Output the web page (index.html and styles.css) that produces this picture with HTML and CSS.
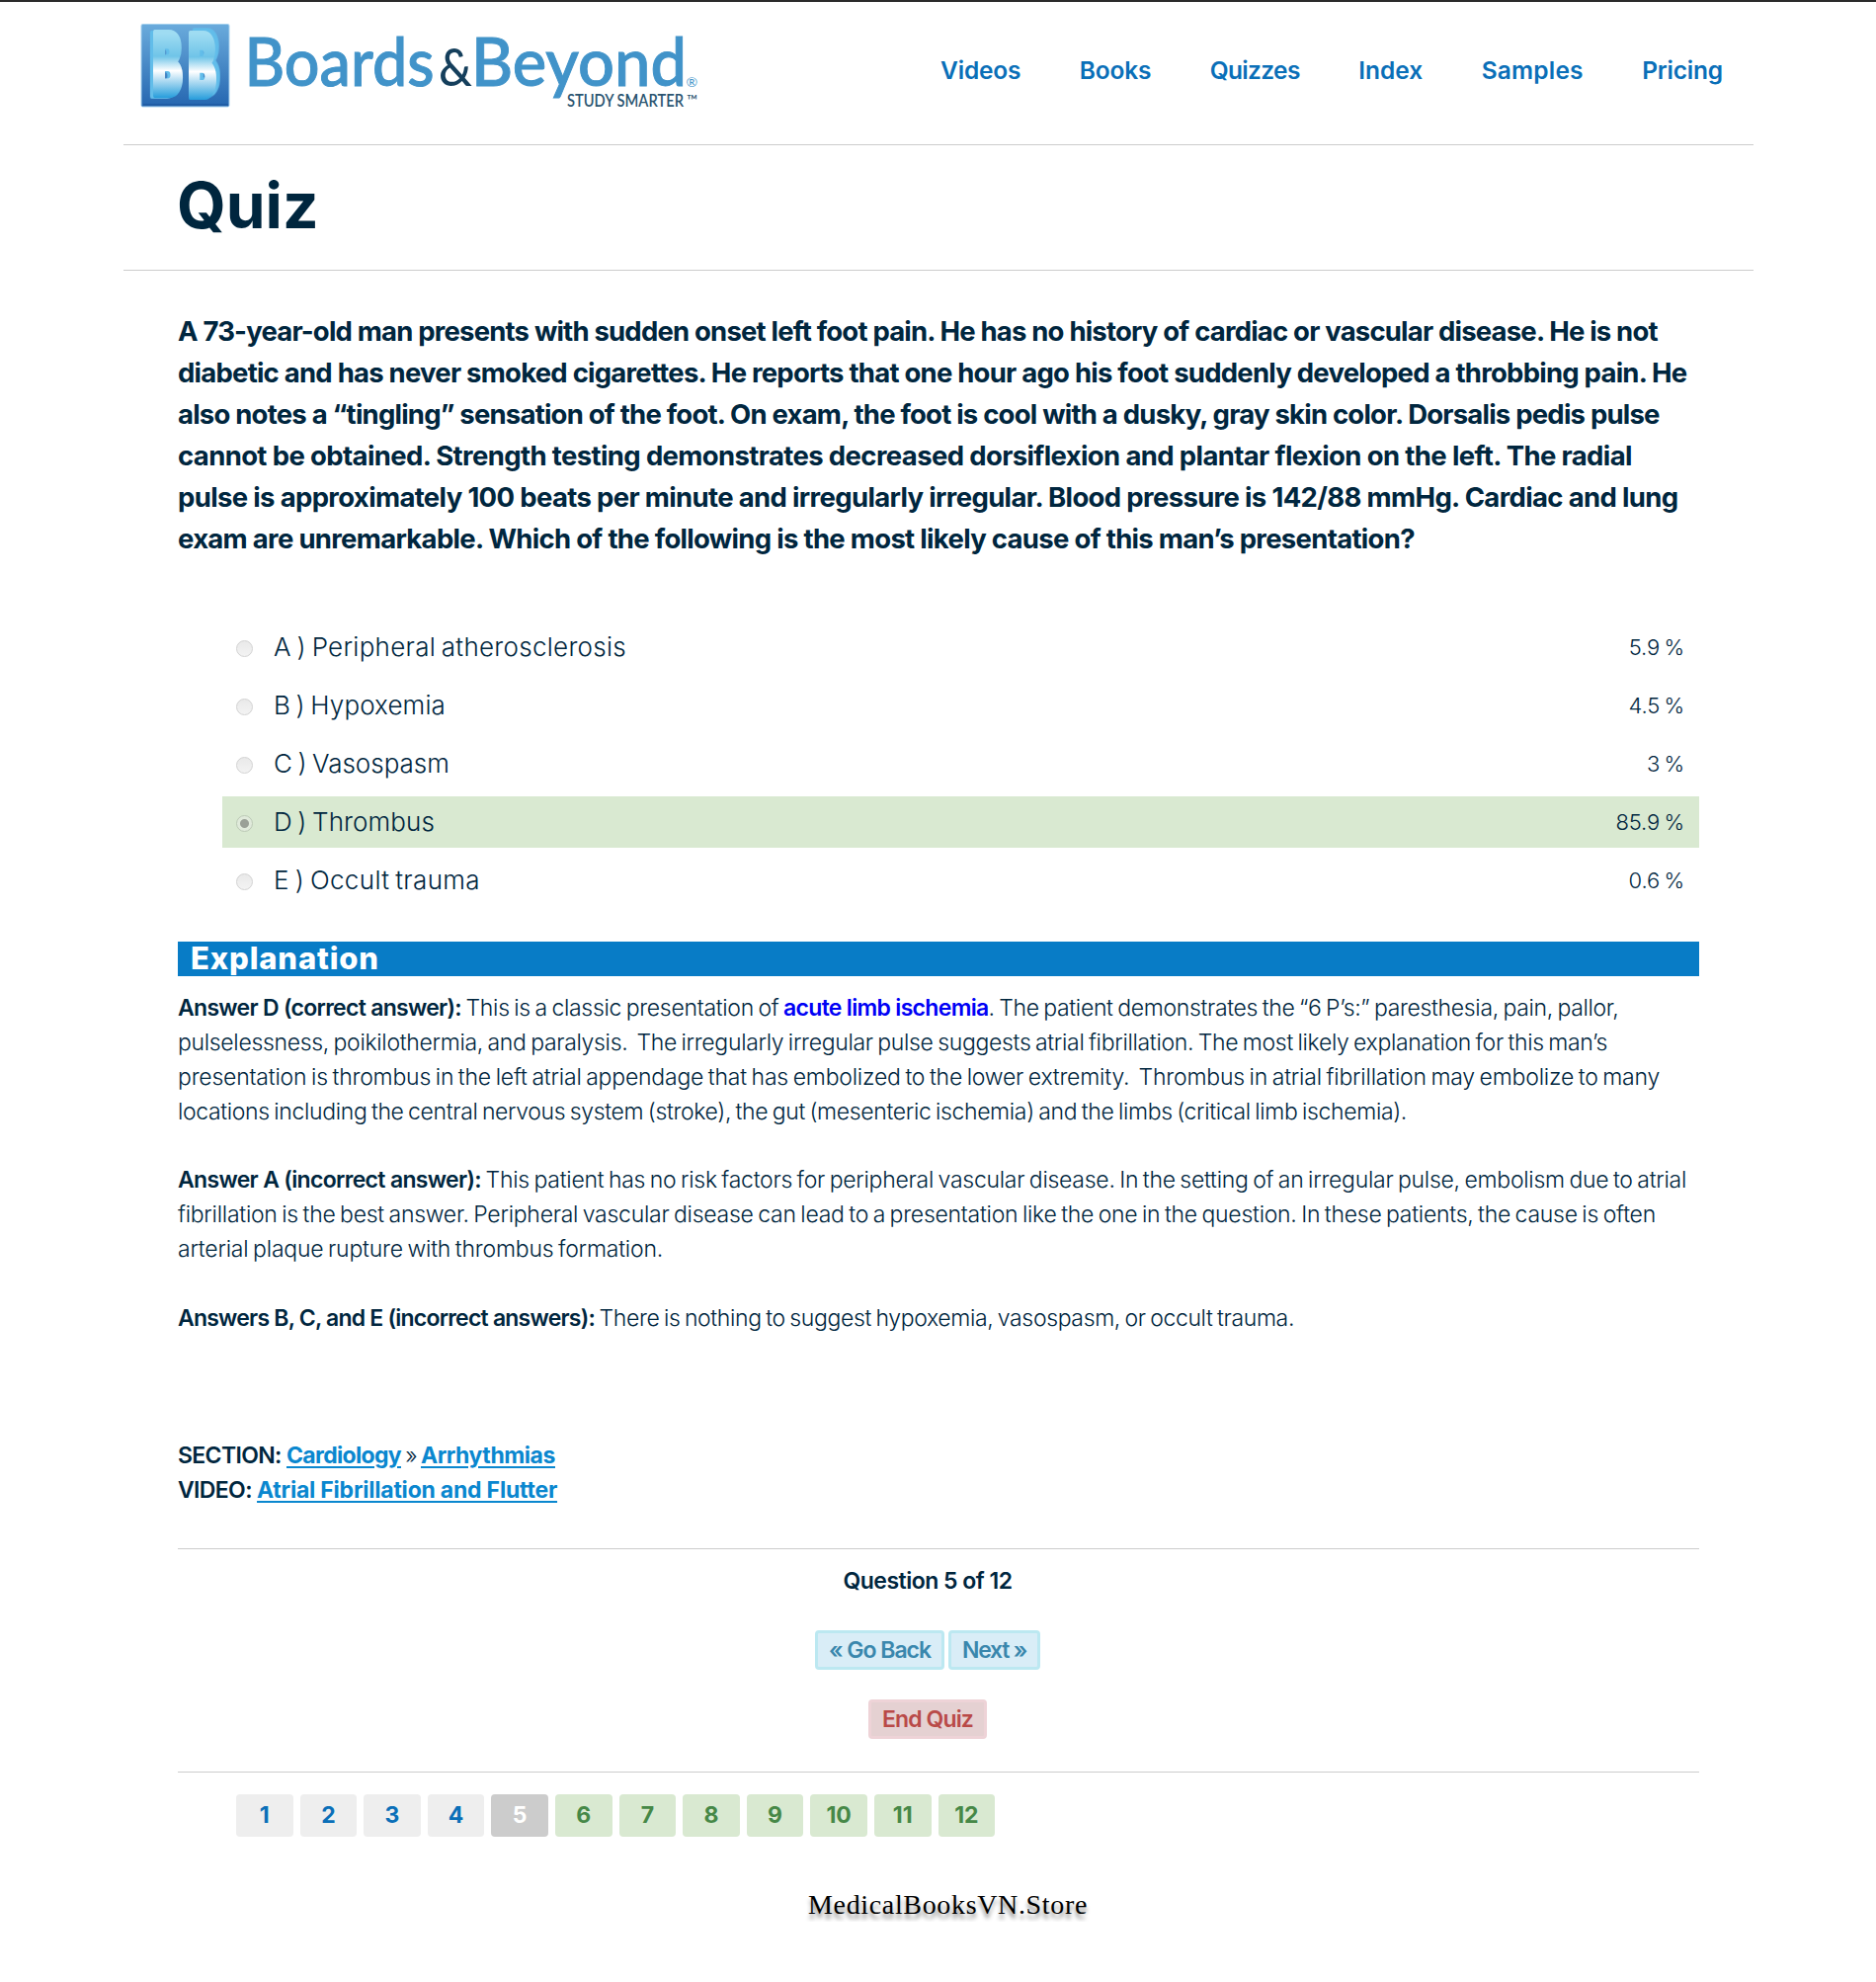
FILE: index.html
```html
<!DOCTYPE html>
<html lang="en">
<head>
<meta charset="utf-8">
<title>Quiz</title>
<link rel="stylesheet" href="styles.css">
</head>
<body>
<div class="page">
<header class="header">
<svg class="logo" width="590" height="100" viewBox="0 0 590 100" role="img" aria-label="Boards and Beyond">
<defs>
<linearGradient id="tile" x1="0" y1="0" x2="0" y2="1"><stop offset="0" stop-color="#6aabdc"/><stop offset="1" stop-color="#2566b0"/></linearGradient>
<linearGradient id="face" x1="0" y1="0" x2="0" y2="1"><stop offset="0.2" stop-color="#9fdcf2"/><stop offset="0.42" stop-color="#6fc4e8"/><stop offset="0.56" stop-color="#ffffff"/><stop offset="0.82" stop-color="#2a9fdc"/></linearGradient>
</defs>
<rect x="18" y="9.500" width="89" height="83.500" rx="1.500" fill="url(#tile)" stroke="#a4d0ee"/>
<path d="M20 91h86" stroke="#1f5aa2" stroke-width="1.500"/>
<g class="mark" stroke-width="7">
<text class="left" transform="translate(29.500 81) scale(.45 .86)" x="0" y="0">B</text>
<text class="back" transform="translate(65.500 83) scale(.42 .88)" x="0" y="0">B</text>
</g>
<g class="word">
<text x="122.500" y="72" textLength="192" lengthAdjust="spacingAndGlyphs">Boards</text>
<text class="amp" x="319" y="72" textLength="34" lengthAdjust="spacingAndGlyphs">&amp;</text>
<text x="352" y="72" textLength="218" lengthAdjust="spacingAndGlyphs">Beyond</text>
</g>
<text class="reg" x="569.500" y="73">®</text>
<text class="tag" x="449" y="93" textLength="118" lengthAdjust="spacingAndGlyphs">STUDY SMARTER</text>
<text class="tm" x="570" y="92">™</text>
</svg>
<nav class="nav"><a>Videos</a><a>Books</a><a>Quizzes</a><a>Index</a><a>Samples</a><a>Pricing</a></nav>
</header>
<div class="title"><h1>Quiz</h1></div>
<main class="main">
<div class="question">
<div>A 73-year-old man presents with sudden onset left foot pain. He has no history of cardiac or vascular disease. He is not</div>
<div>diabetic and has never smoked cigarettes. He reports that one hour ago his foot suddenly developed a throbbing pain. He</div>
<div>also notes a “tingling” sensation of the foot. On exam, the foot is cool with a dusky, gray skin color. Dorsalis pedis pulse</div>
<div>cannot be obtained. Strength testing demonstrates decreased dorsiflexion and plantar flexion on the left. The radial</div>
<div>pulse is approximately 100 beats per minute and irregularly irregular. Blood pressure is 142/88 mmHg. Cardiac and lung</div>
<div>exam are unremarkable. Which of the following is the most likely cause of this man’s presentation?</div>
</div>
<ul class="options">
<li><i class="radio"></i><span>A ) Peripheral atherosclerosis</span><b class="pct">5.9 %</b></li>
<li><i class="radio"></i><span>B ) Hypoxemia</span><b class="pct">4.5 %</b></li>
<li><i class="radio"></i><span>C ) Vasospasm</span><b class="pct">3 %</b></li>
<li class="right"><i class="radio on"></i><span>D ) Thrombus</span><b class="pct">85.9 %</b></li>
<li><i class="radio"></i><span>E ) Occult trauma</span><b class="pct">0.6 %</b></li>
</ul>
<h2>Explanation</h2>
<div class="explain">
<div class="d">
<div><strong>Answer D (correct answer):</strong><span> This is a classic presentation of </span><a class="term">acute limb ischemia</a><span class="after">. The patient demonstrates the “6 P’s:” paresthesia, pain, pallor,</span></div>
<div>pulselessness, poikilothermia, and paralysis.  The irregularly irregular pulse suggests atrial fibrillation. The most likely explanation for this man’s</div>
<div>presentation is thrombus in the left atrial appendage that has embolized to the lower extremity.  Thrombus in atrial fibrillation may embolize to many</div>
<div>locations including the central nervous system (stroke), the gut (mesenteric ischemia) and the limbs (critical limb ischemia).</div>
</div>
<div class="a">
<div><strong>Answer A (incorrect answer):</strong><span> This patient has no risk factors for peripheral vascular disease. In the setting of an irregular pulse, embolism due to atrial</span></div>
<div>fibrillation is the best answer. Peripheral vascular disease can lead to a presentation like the one in the question. In these patients, the cause is often</div>
<div>arterial plaque rupture with thrombus formation.</div>
</div>
<div class="bce"><strong>Answers B, C, and E (incorrect answers):</strong><span> There is nothing to suggest hypoxemia, vasospasm, or occult trauma.</span></div>
<div class="source">
<div><strong>SECTION: </strong><a class="link">Cardiology</a><span> » </span><a class="link topic">Arrhythmias</a></div>
<div><strong>VIDEO: </strong><a class="link video">Atrial Fibrillation and Flutter</a></div>
</div>
</div>
<div class="controls">
<p>Question 5 of 12</p>
<div class="buttons"><a class="btn">« Go Back</a><a class="btn next">Next »</a></div>
<a class="btn end">End Quiz</a>
</div>
<div class="pager"><a>1</a><a>2</a><a>3</a><a>4</a><a class="now">5</a><a class="todo">6</a><a class="todo">7</a><a class="todo">8</a><a class="todo">9</a><a class="todo">10</a><a class="todo">11</a><a class="todo">12</a></div>
</main>
<footer>MedicalBooksVN.Store</footer>
</div>
</body>
</html>
```
FILE: styles.css
```css
* { box-sizing: border-box; }
body { margin: 0; background: #fff; color: #00263e; font-family: Inter, "Liberation Sans", sans-serif; border-top: 2px solid #2b2b2b; }
.page { width: 1650px; margin-left: 125px; display: flex; flex-direction: column; }

/* Header */
.header { height: 145px; border-bottom: 1px solid #ccc; display: flex; justify-content: space-between; padding: 13px 31px 0 0; }
.logo { display: block; overflow: visible; }
.mark { font: 900 100px Inter, sans-serif; stroke-linejoin: round; fill: url(#face); stroke: url(#face); }
.mark .left { filter: drop-shadow(-7px 1px 0 #62bdea); }
.mark .back { filter: drop-shadow(9px -3px 0 #62bdea); }
.word { font: 500 68px Lato, sans-serif; fill: #4193c9; stroke: #4193c9; stroke-width: 1px; }
.word .amp { font-size: 53px; fill: #153f5c; stroke: none; }
.tag { font: 600 17px Lato, sans-serif; fill: #2a5470; }
.reg { font: 14px Lato, sans-serif; fill: #4193c9; }
.tm { font: 15px Lato, sans-serif; fill: #2a5470; }
.nav { display: flex; gap: 59.5px; padding-top: 40px; font: 600 24.5px/32px Inter, sans-serif; color: #0a6fb8; letter-spacing: -.2px; }
.nav a:nth-child(3) { letter-spacing: -.65px; }
.nav a:nth-child(4) { letter-spacing: 0; }
.nav a:nth-child(5) { letter-spacing: .18px; }

.title { height: 127px; border-bottom: 1px solid #ccc; padding: 22px 54px; }
h1 { margin: 0; font: 700 64px/78px Inter, sans-serif; letter-spacing: 0; }
.main { padding: 40px 55px 0; }

/* Question, tracked line by line */
.question { font-size: 27.5px; line-height: 42px; font-weight: 650; height: 252px; white-space: nowrap; }
.question :nth-child(1) { letter-spacing: -.808px; }
.question :nth-child(2) { letter-spacing: -.767px; }
.question :nth-child(3) { letter-spacing: -.785px; }
.question :nth-child(4) { letter-spacing: -.63px; }
.question :nth-child(5) { letter-spacing: -.656px; }
.question :nth-child(6) { letter-spacing: -.698px; }

/* Answer choices */
.options { list-style: none; margin: 63px 0 0 45px; padding: 0; display: flex; flex-direction: column; gap: 7px; }
.options li { height: 52px; display: flex; align-items: center; padding: 0 15px 1px 14px; font-size: 26px; font-weight: 350; word-spacing: -.07em; }
.options li:nth-child(1) span { letter-spacing: .274px; }
.options li:nth-child(2) span { letter-spacing: .113px; }
.options li:nth-child(4) span { letter-spacing: .085px; }
.options li:nth-child(5) span { letter-spacing: .348px; }
.right { background: #d9e9d1; }
.radio { width: 17px; height: 17px; border: 1px solid #d2d2d2; border-radius: 50%; background: linear-gradient(#e9e9e9, #f3f3f3); margin: 4px 21px 0 0; }
.radio.on { background: radial-gradient(circle, #9aa097 0 4px, #e0eadb 5px); border-color: #bccab6; }
.pct { margin-left: auto; font-size: 22px; font-weight: 350; letter-spacing: -.1px; }

/* Explanation */
h2 { margin: 36px 0 15px; height: 35px; background: #087cc6; color: #fff; padding-left: 13px; font: 800 31px/34px Inter, sans-serif; letter-spacing: .85px; }
.explain { font-size: 23px; line-height: 34.87px; font-weight: 300; height: 564px; word-spacing: -.07em; display: flex; flex-direction: column; }
.explain strong, .term, .link { word-spacing: 0; font-weight: 600; }
.explain > div { white-space: nowrap; }
.explain > div > *, .explain > div > div > * { white-space: pre; }
.explain .d, .explain .a { margin-bottom: 34.87px; }
.d strong { letter-spacing: -.714px; }
.d span { letter-spacing: -.3px; }
.d .term { letter-spacing: -.687px; color: #0000f5; }
.d .after { letter-spacing: -.328px; }
.d > :nth-child(2) { letter-spacing: -.318px; }
.d > :nth-child(3) { letter-spacing: -.207px; }
.d > :nth-child(4) { letter-spacing: -.355px; }
.a strong { letter-spacing: -.676px; }
.a span { letter-spacing: -.268px; }
.a > :nth-child(2) { letter-spacing: -.263px; }
.a > :nth-child(3) { letter-spacing: -.211px; }
.bce { margin-bottom: 104px; }
.bce strong { letter-spacing: -.781px; }
.bce span { letter-spacing: -.361px; }
.source strong { letter-spacing: -.63px; }
.source span { letter-spacing: -.672px; }
.link { color: #0a87cf; letter-spacing: -.673px; text-decoration: underline; text-decoration-thickness: 2px; text-underline-offset: 3px; }
.explain .link { font-weight: 700; }
.topic { letter-spacing: -.442px; }
.video { letter-spacing: -.215px; }

/* Quiz controls */
.controls { height: 227px; border: solid #ccc; border-width: 1px 0; padding: 15px 22px 0 0; display: flex; flex-direction: column; align-items: center; font-size: 23px; font-weight: 600; line-height: 35px; }
.controls p { margin: 0 0 32px; letter-spacing: -.511px; }
.buttons { display: flex; gap: 4px; margin-bottom: 30px; }
.btn { height: 40px; border: 3px solid #bce8f1; border-radius: 4px; background: #d9edf7; color: #3a87ad; padding: 0 11px; line-height: 34px; letter-spacing: -1.031px; }
.next { letter-spacing: -1.258px; }
.end { border-color: #eed3d7; background: #e5d1d2; color: #b94a48; letter-spacing: -.881px; }
.pager { display: flex; gap: 7px; padding: 22px 0 0 59px; }
.pager a { width: 57.6px; height: 43px; border-radius: 4px; background: #eee; color: #0a6fb8; font-size: 23px; font-weight: 700; line-height: 42px; text-align: center; }
.pager .now { background: #ccc; color: #fff; }
.pager .todo { background: #d9e9d1; color: #468847; }
footer { margin: 52px 0 0 693px; font: 28px/34px "Liberation Serif", serif; letter-spacing: .657px; color: #000; text-shadow: 0 5px 4px rgba(0,0,0,.45); }
```
